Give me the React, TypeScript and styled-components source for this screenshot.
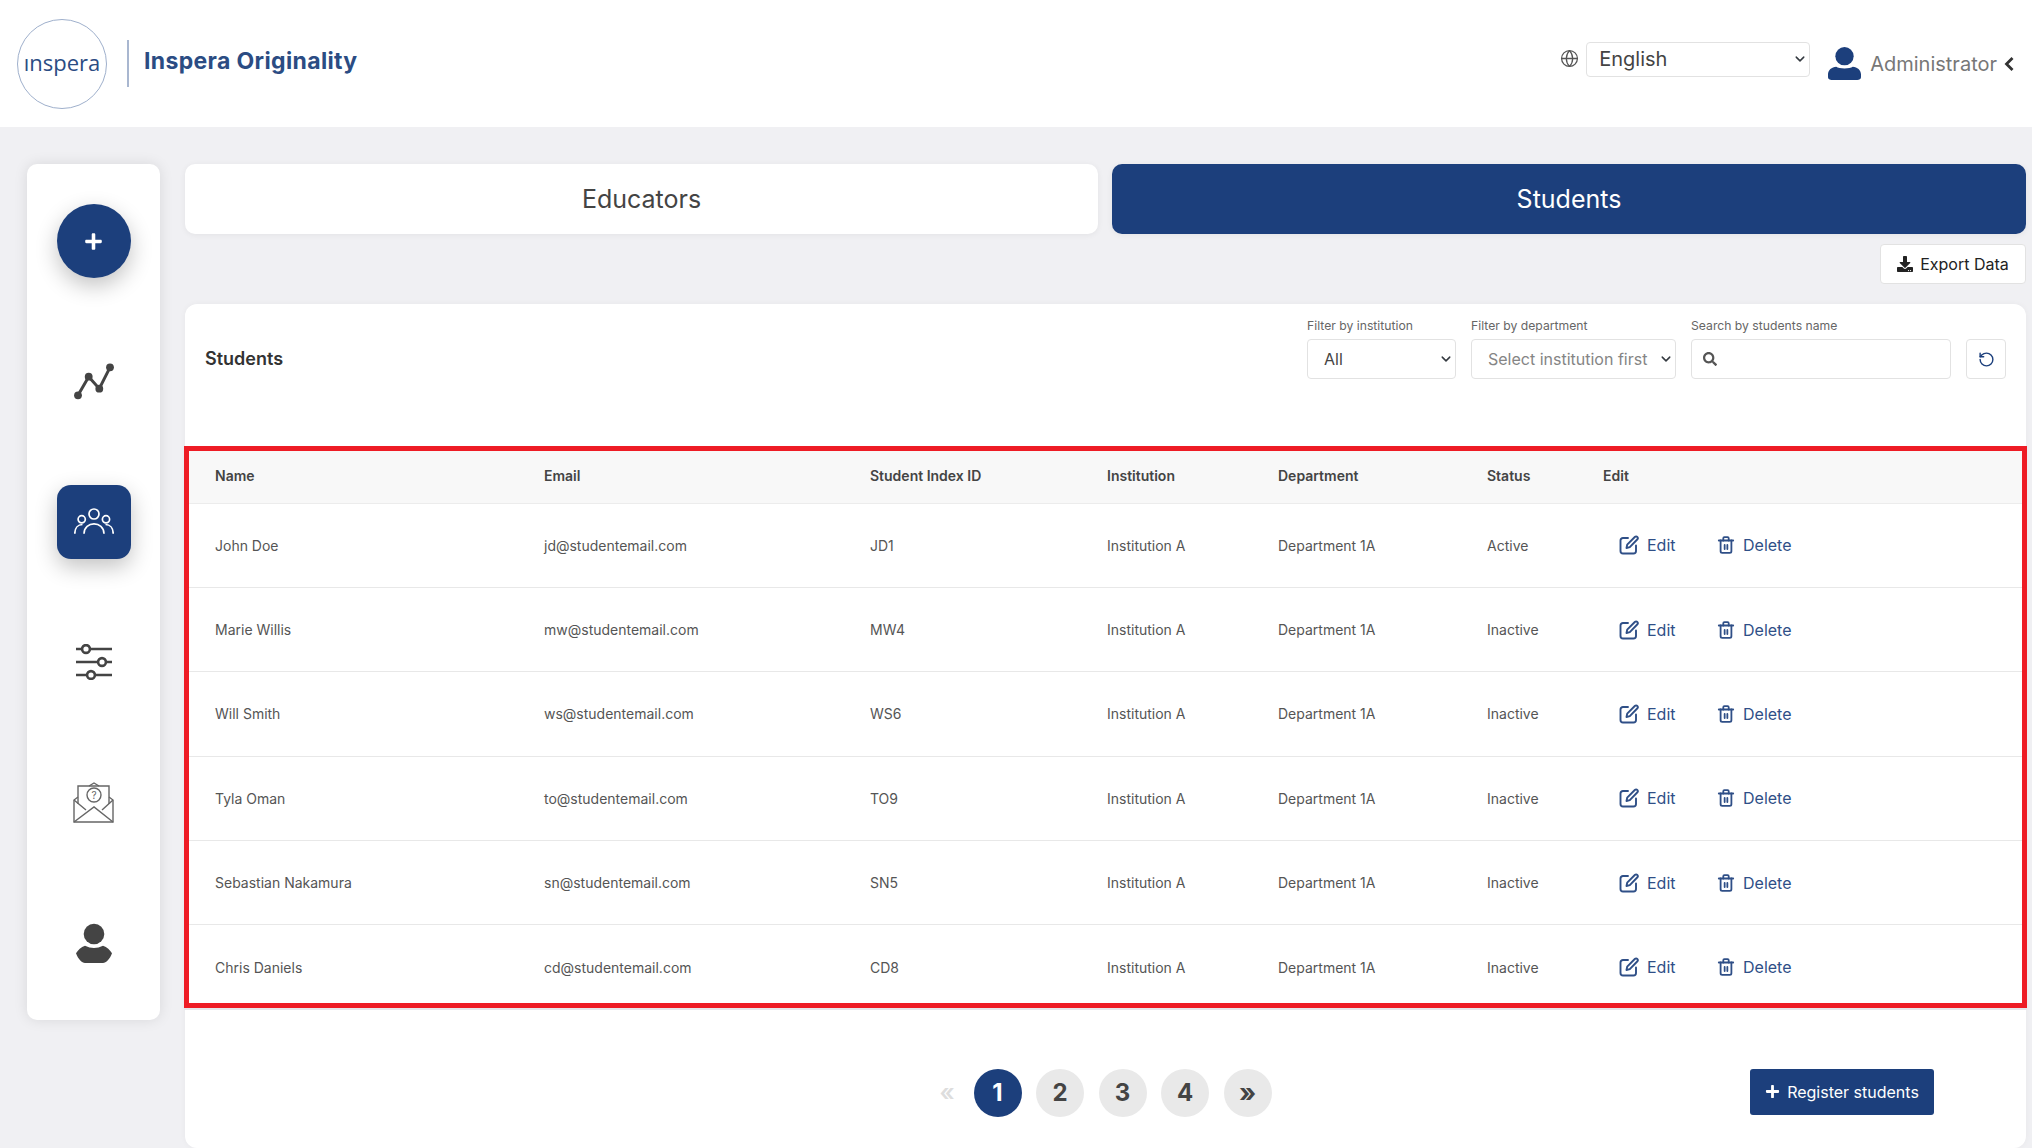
import React from "react";
import styled, { createGlobalStyle } from "styled-components";
import { FaDownload, FaPlus, FaSearch } from "react-icons/fa";
import { RotateCcw, Globe } from "lucide-react";

const NAVY = "#1c3f7c";

const GlobalStyle = createGlobalStyle`
  html, body {
    margin: 0;
    padding: 0;
    height: 1148px;
    overflow: hidden;
    background: #f0f0f3;
    font-family: Inter, "Liberation Sans", sans-serif;
  }
  * { box-sizing: border-box; }
`;

const Page = styled.div`
  width: 2032px;
  height: 1148px;
  display: flex;
  flex-direction: column;
  overflow: hidden;
`;

const Header = styled.header`
  height: 127px;
  flex: none;
  background: #fff;
  display: flex;
  align-items: center;
  padding: 0 18px 0 17px;
`;

const LogoCircle = styled.div`
  width: 90px;
  height: 90px;
  border-radius: 50%;
  border: 1px solid #9fb0cc;
  display: flex;
  align-items: center;
  justify-content: center;
  padding-bottom: 4px;
  color: #2b4c83;
  font-size: 22px;
  font-weight: 500;
  font-family: "Open Sans", sans-serif;
`;

const LogoDivider = styled.div`
  width: 2px;
  height: 47px;
  background: #a9b7d0;
  margin: 0 15px 0 20px;
`;

const LogoTitle = styled.div`
  font-size: 23px;
  font-weight: 700;
  color: #2b4c83;
  letter-spacing: 0.35px;
  white-space: nowrap;
  margin-top: -5px;
`;

const HeaderRight = styled.div`
  margin-left: auto;
  display: flex;
  align-items: center;
`;

const GlobeWrap = styled.div`
  display: flex;
  color: #555;
  margin: -11px 7px 0 0;
`;

const Select = styled.select<{ $w: number; $h: number; $size: number; $muted?: boolean }>`
  appearance: none;
  width: ${(p) => p.$w}px;
  height: ${(p) => p.$h}px;
  font-family: Inter, sans-serif;
  font-size: ${(p) => p.$size}px;
  color: ${(p) => (p.$muted ? "#858585" : "#444")};
  background: #fff url("data:image/svg+xml,%3Csvg xmlns='http://www.w3.org/2000/svg' viewBox='0 0 16 16'%3E%3Cpath fill='none' stroke='%23343a40' stroke-linecap='round' stroke-linejoin='round' stroke-width='2.4' d='m2 5 6 6 6-6'/%3E%3C/svg%3E") no-repeat right 4px center / 10px 10px;
  border: 1px solid #e2e2e2;
  border-radius: 4px;
  padding: 0 16px;
  outline: none;
`;

const LangSelect = styled(Select)`
  margin-top: -9px;
  padding: 0 12px;
`;

const UserBlock = styled.div`
  display: flex;
  align-items: center;
  margin: 0 0 0 18px;
  color: #777;
  font-size: 20px;
`;

const UserName = styled.span`
  margin: 0 7px 0 9px;
`;

const Main = styled.div`
  flex: 1;
  min-height: 0;
  display: flex;
  align-items: flex-start;
  padding: 37px 6px 0 27px;
  gap: 25px;
`;

const Sidebar = styled.nav`
  width: 133px;
  flex: none;
  padding: 7px 0;
  background: #fff;
  border-radius: 10px;
  box-shadow: 0 0 14px rgba(0, 0, 0, 0.1);
  display: flex;
  flex-direction: column;
`;

const SideItem = styled.div`
  height: 140.4px;
  display: flex;
  align-items: center;
  justify-content: center;
`;

const SideButton = styled.div<{ $round?: boolean }>`
  width: 74px;
  height: 74px;
  border-radius: ${(p) => (p.$round ? "50%" : "14px")};
  background: ${NAVY};
  color: #fff;
  display: flex;
  align-items: center;
  justify-content: center;
  box-shadow: 0 8px 22px rgba(0, 0, 0, 0.24);
`;

const Content = styled.main`
  flex: 1;
  min-width: 0;
  display: flex;
  flex-direction: column;
`;

const Tabs = styled.div`
  display: grid;
  grid-template-columns: 913px 1fr;
  gap: 14px;
`;

const Tab = styled.div<{ $active?: boolean }>`
  height: 70px;
  border-radius: 10px;
  display: flex;
  align-items: center;
  justify-content: center;
  font-size: 25px;
  background: ${(p) => (p.$active ? NAVY : "#fff")};
  color: ${(p) => (p.$active ? "#fff" : "#444")};
  box-shadow: 0 1px 6px rgba(0, 0, 0, 0.06);
`;

const ExportRow = styled.div`
  display: flex;
  justify-content: flex-end;
  padding-top: 10px;
  height: 70px;
`;

const ExportButton = styled.button`
  width: 146px;
  height: 40px;
  background: #fff;
  border: 1px solid #e2e2e2;
  border-radius: 4px;
  display: flex;
  align-items: center;
  justify-content: center;
  gap: 7px;
  font-family: Inter, sans-serif;
  font-size: 16px;
  color: #222;
  padding: 0;
`;

const Card = styled.section`
  height: 844px;
  background: #fff;
  border-radius: 12px;
  display: flex;
  flex-direction: column;
  box-shadow: 0 0 6px rgba(0, 0, 0, 0.04);
`;

const CardHead = styled.div`
  height: 142px;
  flex: none;
  display: flex;
  align-items: flex-start;
  padding: 14px 20px 0 20px;
`;

const CardTitle = styled.h2`
  margin: 30px 0 0 0;
  font-size: 18px;
  font-weight: 600;
  color: #333;
  line-height: 22px;
`;

const Filters = styled.div`
  margin-left: auto;
  display: flex;
  align-items: flex-end;
  gap: 15px;
`;

const Field = styled.label`
  display: flex;
  flex-direction: column;
  gap: 6px;
  font-size: 12.2px;
  line-height: 15px;
  color: #666;
`;

const SearchBox = styled.div`
  width: 260px;
  height: 40px;
  border: 1px solid #e2e2e2;
  border-radius: 4px;
  display: flex;
  align-items: center;
  padding: 0 11px;
  color: #555;
`;

const ResetButton = styled.button`
  width: 40px;
  height: 40px;
  background: #fff;
  border: 1px solid #e2e2e2;
  border-radius: 4px;
  color: ${NAVY};
  display: flex;
  align-items: center;
  justify-content: center;
  padding: 0;
`;

const TableFrame = styled.div`
  margin: 0 -1px;
  border: 5px solid #ee1c25;
  flex: none;
  box-shadow: 0 2px 0 #e6e6ea;
`;

const Table = styled.table`
  width: 100%;
  border-collapse: collapse;
  table-layout: fixed;
  font-size: 14px;
  color: #555;
`;

const Th = styled.th<{ $w?: number; $pad?: number }>`
  width: ${(p) => (p.$w ? `${p.$w}px` : "auto")};
  height: 52px;
  background: #f8f8f8;
  border-bottom: 1px solid #ececec;
  text-align: left;
  font-weight: 600;
  color: #444;
  padding: 0 0 2px ${(p) => p.$pad ?? 0}px;
`;

const Td = styled.td<{ $pad?: number }>`
  height: 84.4px;
  padding: 0 0 0 ${(p) => p.$pad ?? 0}px;
  border-bottom: 1px solid #e8e8e8;
  white-space: nowrap;
`;

const LastRow = styled.tr`
  && td {
    height: 78px;
    padding-top: 6px;
    border-bottom: none;
  }
`;

const Actions = styled.div`
  display: flex;
  align-items: center;
  padding-left: 16px;
  color: #2f4f87;
  font-size: 16px;
`;

const Action = styled.span<{ $w: number }>`
  display: inline-flex;
  align-items: center;
  gap: 8px;
  width: ${(p) => p.$w}px;
`;

const CardFoot = styled.div`
  flex: 1;
  display: flex;
  align-items: flex-start;
  padding-top: 61px;
  position: relative;
  justify-content: flex-end;
  padding-right: 92px;
`;

const Pager = styled.div`
  position: absolute;
  left: 749px;
  top: 61px;
  display: flex;
  align-items: center;
  gap: 14.5px;
`;

const PageArrow = styled.span`
  width: 26px;
  font-size: 24px;
  font-weight: 600;
  color: #ddd;
  text-align: center;
  margin-right: -1px;
`;

const PageDot = styled.span<{ $active?: boolean; $arrow?: boolean }>`
  width: 48px;
  height: 48px;
  border-radius: 50%;
  display: flex;
  align-items: center;
  justify-content: center;
  font-size: ${(p) => (p.$arrow ? 26 : 24)}px;
  font-weight: 700;
  background: ${(p) => (p.$active ? NAVY : "#e9e9e9")};
  color: ${(p) => (p.$active ? "#fff" : "#444")};
`;

const RegisterButton = styled.button`
  width: 184px;
  height: 46px;
  border: none;
  border-radius: 3px;
  background: ${NAVY};
  color: #fff;
  font-family: Inter, sans-serif;
  font-size: 16px;
  display: flex;
  align-items: center;
  justify-content: center;
  gap: 7px;
  padding: 0;
`;

const ChevronIcon = () => (
  <svg width="10" height="16" viewBox="0 0 10 16" fill="none" stroke="#333" strokeWidth="2.8">
    <path d="M8.5 2 L2.5 8 L8.5 14" />
  </svg>
);

const ChartIcon = () => (
  <svg width="40" height="37" viewBox="0 0 40 37" fill="none">
    <path d="M4 32.3 L14.7 13.7 L25.3 25.7 L36 4.3" stroke="#444" strokeWidth="3" />
    <circle cx="4" cy="32.3" r="3.9" fill="#444" />
    <circle cx="14.7" cy="13.7" r="3.9" fill="#444" />
    <circle cx="25.3" cy="25.7" r="3.9" fill="#444" />
    <circle cx="36" cy="4.3" r="3.9" fill="#444" />
  </svg>
);

const UsersIcon = () => (
  <svg width="40" height="27" viewBox="0 0 40 27" fill="none" stroke="#fff" strokeWidth="1.7">
    <circle cx="20" cy="6" r="5" />
    <circle cx="7.7" cy="11.3" r="3.6" />
    <circle cx="32" cy="11.3" r="3.6" />
    <path d="M10 25.7 C10 12.5 30 12.5 30 25.7" />
    <path d="M0.8 25.7 C0.8 20 4 16.5 8.5 16.5" />
    <path d="M39.2 25.7 C39.2 20 36 16.5 31.5 16.5" />
  </svg>
);

const SlidersIcon = () => (
  <svg width="38" height="36" viewBox="0 0 38 36" fill="none" stroke="#444" strokeWidth="2.6">
    <path d="M1 5 H37" />
    <circle cx="11" cy="5" r="3.9" fill="#fff" />
    <path d="M1 18 H37" />
    <circle cx="27" cy="18" r="3.9" fill="#fff" />
    <path d="M1 31 H37" />
    <circle cx="16" cy="31" r="3.9" fill="#fff" />
  </svg>
);

const MailIcon = () => (
  <svg width="42" height="42" viewBox="0 0 42 42" fill="none" stroke="#666" strokeWidth="1.4">
    <path d="M5 15 L1 18 V40 H40 V18 L36 15" />
    <path d="M5 22 V4 H36 V22" />
    <path d="M16 4 L21 1 L26 4" />
    <path d="M1 40 L21 25 L40 40" />
    <path d="M1 18 L13 28 M40 18 L29 28" />
    <circle cx="21" cy="13" r="7" />
    <text x="21" y="17" textAnchor="middle" fontSize="10" stroke="none" fill="#666" fontFamily="Inter">?</text>
  </svg>
);

const PersonIcon = ({ size, color }: { size: number; color: string }) => (
  <svg width={size} height={size} viewBox="0 0 36 36" fill={color}>
    <circle cx="18" cy="10" r="10" />
    <path d="M9 21.5 C12 24 24 24 27 21.5 C32 22 36 25 36 30 V33 C36 35 34 36 32 36 H4 C2 36 0 35 0 33 V30 C0 25 4 22 9 21.5 Z" />
  </svg>
);

const BigPerson = () => (
  <svg width="36" height="41" viewBox="0 0 36 41" fill="#444">
    <circle cx="18" cy="11" r="10.3" />
    <path d="M9 22.7 Q18 27.5 27 22.7 C31 24 34 27 36 30.3 C34 36 30 40 27 40 H9 C6 40 2 36 0 30.3 C2 27 5 24 9 22.7 Z" />
  </svg>
);

const EditIcon = () => (
  <svg width="20" height="20" viewBox="0 0 20 20" fill="none" stroke="#2f4f87" strokeWidth="1.9" strokeLinecap="round" strokeLinejoin="round">
    <path d="M9 3 H4 C2.5 3 1.5 4 1.5 5.5 V16 C1.5 17.5 2.5 18.5 4 18.5 H14.5 C16 18.5 17 17.5 17 16 V10.5" />
    <path d="M7.5 13 L8.2 9.6 L15.8 2 C16.6 1.2 17.6 1.2 18.3 2 C19 2.7 19 3.7 18.2 4.5 L10.8 12.2 Z" />
  </svg>
);

const TrashIcon = () => (
  <svg width="18" height="20" viewBox="-1 -1 20 22" fill="none" stroke="#2f4f87" strokeWidth="2" strokeLinecap="round" strokeLinejoin="round">
    <path d="M1 5 H17" />
    <path d="M6 5 V2.5 C6 1.8 6.5 1.2 7.2 1.2 H10.8 C11.5 1.2 12 1.8 12 2.5 V5" />
    <path d="M3 5 V17 C3 18 3.8 18.8 4.8 18.8 H13.2 C14.2 18.8 15 18 15 17 V5" />
    <path d="M7.5 10 V14.5 M10.5 10 V14.5" />
  </svg>
);

const students = [
  ["John Doe", "jd@studentemail.com", "JD1", "Active"],
  ["Marie Willis", "mw@studentemail.com", "MW4", "Inactive"],
  ["Will Smith", "ws@studentemail.com", "WS6", "Inactive"],
  ["Tyla Oman", "to@studentemail.com", "TO9", "Inactive"],
  ["Sebastian Nakamura", "sn@studentemail.com", "SN5", "Inactive"],
  ["Chris Daniels", "cd@studentemail.com", "CD8", "Inactive"],
];

const Row = ({ s }: { s: string[] }) => (
  <>
    <Td $pad={26}>{s[0]}</Td>
    <Td>{s[1]}</Td>
    <Td>{s[2]}</Td>
    <Td>Institution A</Td>
    <Td>Department 1A</Td>
    <Td>{s[3]}</Td>
    <Td>
      <Actions>
        <Action $w={98}>
          <EditIcon /> Edit
        </Action>
        <Action $w={100}>
          <TrashIcon /> Delete
        </Action>
      </Actions>
    </Td>
  </>
);

export default function App() {
  return (
    <Page>
      <GlobalStyle />
      <Header>
        <LogoCircle>ınspera</LogoCircle>
        <LogoDivider />
        <LogoTitle>Inspera Originality</LogoTitle>
        <HeaderRight>
          <GlobeWrap>
            <Globe size={19} strokeWidth={1.6} />
          </GlobeWrap>
          <LangSelect $w={224} $h={35} $size={20} defaultValue="English">
            <option>English</option>
          </LangSelect>
          <UserBlock>
            <PersonIcon size={33} color={NAVY} />
            <UserName>Administrator</UserName>
            <ChevronIcon />
          </UserBlock>
        </HeaderRight>
      </Header>
      <Main>
        <Sidebar>
          <SideItem>
            <SideButton $round>
              <FaPlus size={19} />
            </SideButton>
          </SideItem>
          <SideItem>
            <ChartIcon />
          </SideItem>
          <SideItem>
            <SideButton>
              <UsersIcon />
            </SideButton>
          </SideItem>
          <SideItem>
            <SlidersIcon />
          </SideItem>
          <SideItem>
            <MailIcon />
          </SideItem>
          <SideItem>
            <BigPerson />
          </SideItem>
        </Sidebar>
        <Content>
          <Tabs>
            <Tab>Educators</Tab>
            <Tab $active>Students</Tab>
          </Tabs>
          <ExportRow>
            <ExportButton>
              <FaDownload size={16} /> Export Data
            </ExportButton>
          </ExportRow>
          <Card>
            <CardHead>
              <CardTitle>Students</CardTitle>
              <Filters>
                <Field>
                  Filter by institution
                  <Select $w={149} $h={40} $size={16} defaultValue="All">
                    <option>All</option>
                  </Select>
                </Field>
                <Field>
                  Filter by department
                  <Select $w={205} $h={40} $size={16} $muted defaultValue="first">
                    <option value="first">Select institution first</option>
                  </Select>
                </Field>
                <Field>
                  Search by students name
                  <SearchBox>
                    <FaSearch size={14} />
                  </SearchBox>
                </Field>
                <ResetButton>
                  <RotateCcw size={17} />
                </ResetButton>
              </Filters>
            </CardHead>
            <TableFrame>
              <Table>
                <thead>
                  <tr>
                    <Th $w={355} $pad={26}>Name</Th>
                    <Th $w={326}>Email</Th>
                    <Th $w={237}>Student Index ID</Th>
                    <Th $w={171}>Institution</Th>
                    <Th $w={209}>Department</Th>
                    <Th $w={116}>Status</Th>
                    <Th>Edit</Th>
                  </tr>
                </thead>
                <tbody>
                  {students.slice(0, 5).map((s) => (
                    <tr key={s[0]}>
                      <Row s={s} />
                    </tr>
                  ))}
                  <LastRow>
                    <Row s={students[5]} />
                  </LastRow>
                </tbody>
              </Table>
            </TableFrame>
            <CardFoot>
              <Pager>
                <PageArrow>«</PageArrow>
                <PageDot $active>1</PageDot>
                <PageDot>2</PageDot>
                <PageDot>3</PageDot>
                <PageDot>4</PageDot>
                <PageDot $arrow>»</PageDot>
              </Pager>
              <RegisterButton>
                <FaPlus size={15} /> Register students
              </RegisterButton>
            </CardFoot>
          </Card>
        </Content>
      </Main>
    </Page>
  );
}
